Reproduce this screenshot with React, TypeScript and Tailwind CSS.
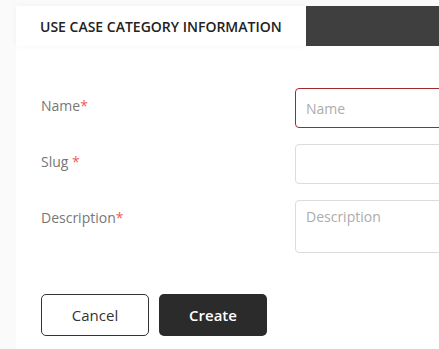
import React from 'react';

const fieldBase =
    'w-[300px] rounded-[4px] border bg-white px-[10px] text-[14px] text-[#333] outline-none placeholder:text-[#acacac]';

const Label: React.FC<{ text: string; gap?: boolean }> = ({ text, gap }) => (
    <label className="pt-[7px] text-[14px] text-[#777]">
        {text}
        {gap && ' '}
        <span className="text-[#f05a5a]">*</span>
    </label>
);

const App: React.FC = () => {
    return (
        <div
            className="h-[349px] w-[439px] overflow-hidden bg-[#fafafa] pl-4 pt-[6px]"
            style={{ fontFamily: '"Open Sans", "Liberation Sans", sans-serif' }}
        >
            {/* Tab header */}
            <div className="flex h-10">
                <div className="flex w-[290px] items-center bg-white pl-6 shadow-[0_0_6px_rgba(0,0,0,0.04)]">
                    <span className="text-[14px] font-semibold text-[#222]">USE CASE CATEGORY INFORMATION</span>
                </div>
                <div className="flex-1 bg-[#3f3f3f]" />
            </div>

            {/* Form card */}
            <div className="h-full bg-white pl-[25px] pt-[42px]">
                <div className="grid grid-cols-[254px_1fr] gap-y-4">
                    <Label text="Name" />
                    <input className={`${fieldBase} h-10 border-[#9e2a2b]`} placeholder="Name" />

                    <Label text="Slug" gap />
                    <input className={`${fieldBase} h-10 border-[#dcdcdc]`} />

                    <Label text="Description" />
                    <textarea
                        className={`${fieldBase} h-[53px] resize-none border-[#dcdcdc] pt-[5px]`}
                        placeholder="Description"
                    />
                </div>

                <div className="mt-[41px] flex gap-[10px]">
                    <button className="h-[42px] w-[108px] rounded-[5px] border border-[#333] bg-white text-[15px] font-medium text-[#333]">
                        Cancel
                    </button>
                    <button className="h-[42px] w-[108px] rounded-[5px] bg-[#2b2b2b] text-[15px] font-semibold text-white">
                        Create
                    </button>
                </div>
            </div>
        </div>
    );
};

export default App;
